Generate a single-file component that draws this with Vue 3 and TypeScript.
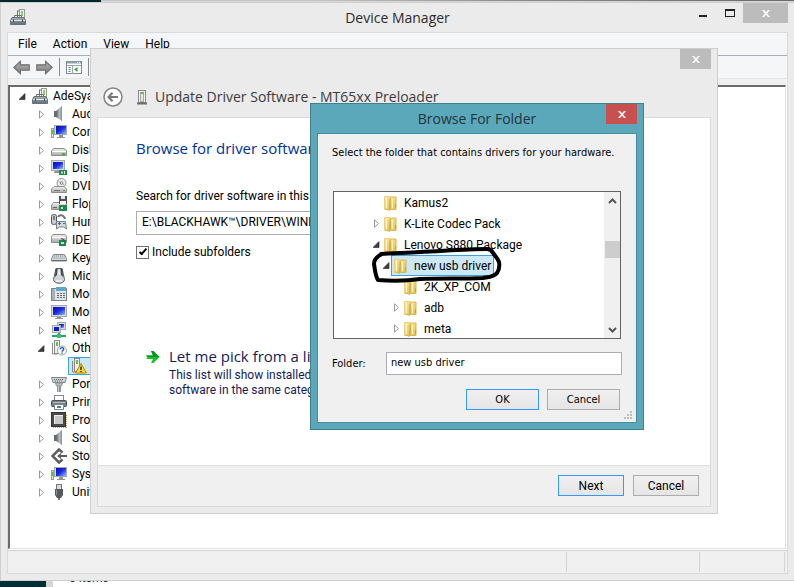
<script setup lang="ts">
import { ref } from 'vue'

interface DeviceNode {
  label: string
  icon: string
  open?: boolean
}

interface FolderNode {
  label: string
  level: number
  state: 'none' | 'closed' | 'open'
  selected?: boolean
}

const menus: string[] = ['File', 'Action', 'View', 'Help']

const devices: DeviceNode[] = [
  { label: 'Audio inputs and outputs', icon: 'speaker' },
  { label: 'Computer', icon: 'computer' },
  { label: 'Disk drives', icon: 'disk' },
  { label: 'Display adapters', icon: 'display' },
  { label: 'DVD/CD-ROM drives', icon: 'dvd' },
  { label: 'Floppy disk controllers', icon: 'floppy' },
  { label: 'Human Interface Devices', icon: 'hid' },
  { label: 'IDE ATA/ATAPI controllers', icon: 'ide' },
  { label: 'Keyboards', icon: 'keyboard' },
  { label: 'Mice and other pointing devices', icon: 'mouse' },
  { label: 'Modems', icon: 'modem' },
  { label: 'Monitors', icon: 'monitor' },
  { label: 'Network adapters', icon: 'network' },
  { label: 'Other devices', icon: 'unknown', open: true },
  { label: 'Ports (COM & LPT)', icon: 'port' },
  { label: 'Print queues', icon: 'printer' },
  { label: 'Processors', icon: 'cpu' },
  { label: 'Sound, video and game controllers', icon: 'speaker' },
  { label: 'Storage controllers', icon: 'storage' },
  { label: 'System devices', icon: 'computer' },
  { label: 'Universal Serial Bus controllers', icon: 'usb' },
]

const folders: FolderNode[] = [
  { label: 'Kamus2', level: 0, state: 'none' },
  { label: 'K-Lite Codec Pack', level: 0, state: 'closed' },
  { label: 'Lenovo S880 Package', level: 0, state: 'open' },
  { label: 'new usb driver', level: 1, state: 'open', selected: true },
  { label: '2K_XP_COM', level: 2, state: 'none' },
  { label: 'adb', level: 2, state: 'closed' },
  { label: 'meta', level: 2, state: 'closed' },
]

const driverPath = ref('E:\\BLACKHAWK™\\DRIVER\\WINDOWS')
const includeSubfolders = ref(true)
const folderName = ref('new usb driver')
</script>

<template>
  <div class="desktop">
    <!-- Shared icon symbols -->
    <svg class="symbols" aria-hidden="true">
      <defs>
        <linearGradient id="g-steel" x1="0" y1="0" x2="0" y2="1">
          <stop offset="0" stop-color="#a9b4bb" /><stop offset="1" stop-color="#5f6c74" />
        </linearGradient>
        <linearGradient id="g-silver" x1="0" y1="0" x2="0" y2="1">
          <stop offset="0" stop-color="#f4f4f4" /><stop offset="1" stop-color="#a8a8a8" />
        </linearGradient>
        <linearGradient id="g-screen" x1="0" y1="0" x2="1" y2="1">
          <stop offset="0" stop-color="#0a0ab0" /><stop offset=".5" stop-color="#1a2fe0" /><stop offset="1" stop-color="#9db8ff" />
        </linearGradient>
        <linearGradient id="g-cone" x1="0" y1="0" x2="1" y2="0">
          <stop offset="0" stop-color="#5b6268" /><stop offset=".6" stop-color="#b9c0c5" /><stop offset="1" stop-color="#79838a" />
        </linearGradient>
        <linearGradient id="g-fold" x1="0" y1="0" x2="1" y2="1">
          <stop offset="0" stop-color="#fbeea4" /><stop offset="1" stop-color="#e0bb4e" />
        </linearGradient>
        <linearGradient id="g-arrow" x1="0" y1="0" x2="0" y2="1">
          <stop offset="0" stop-color="#b4b4b4" /><stop offset="1" stop-color="#7c7c7c" />
        </linearGradient>
      </defs>
      <symbol id="i-x" viewBox="0 0 8 7">
        <path d="M0 0h2l2 2.200L6 0h2L5 3.500 8 7H6L4 4.800 2 7H0l3-3.500z" fill="#fff" />
      </symbol>
      <symbol id="i-closed" viewBox="0 0 7 9">
        <path d="M1.500 .8v7.400L5.500 4.500z" fill="#fff" stroke="#9a9a9a" />
      </symbol>
      <symbol id="i-open" viewBox="0 0 7 9">
        <path d="M6 1.500V7.500H0z" fill="#3c3c3c" stroke="#262626" stroke-width=".6" />
      </symbol>
      <symbol id="i-manager" viewBox="0 0 16 16">
        <rect x="9.500" y=".5" width="5" height="8" fill="#f2f2f2" stroke="#9a9a9a" />
        <rect x="11" y="2" width="2" height="5" fill="#8fd165" />
        <path d="M7 1.500h3v1H8V8H7z" fill="#6c777e" />
        <path d="M2 8.500h12l1.500 3v4H.5v-4z" fill="url(#g-steel)" stroke="#66727a" />
        <path d="M4.500 8.500v-2h7v2" fill="none" stroke="#66727a" />
        <path d="M1 11.500h14" stroke="#dfe6ea" />
        <path d="M3.500 10.500v2.500M12.500 10.500v2.500" stroke="#39444b" />
      </symbol>
      <symbol id="i-speaker" viewBox="0 0 16 16">
        <rect x="3" y="5" width="3" height="6" fill="#636b71" />
        <path d="M5 5l6-5v15l-6-4z" fill="url(#g-cone)" />
        <path d="M10.500 .5v14" stroke="#8f989e" />
      </symbol>
      <symbol id="i-computer" viewBox="0 0 16 16">
        <rect x=".5" y="4.500" width="2" height="9" fill="#e6e6e6" stroke="#9a9a9a" />
        <rect x="1" y="6" width="1" height="4" fill="#59c33a" />
        <rect x="3.500" y="1.500" width="12" height="9" fill="#d9dde2" stroke="#a5a9ae" />
        <rect x="5" y="2" width="10" height="8" fill="url(#g-screen)" />
        <path d="M8 11h4v2h2v1H6v-1h2z" fill="#8f9498" />
      </symbol>
      <symbol id="i-disk" viewBox="0 0 16 16">
        <path d="M3 6.500h10l2.500 2v5H.5v-5z" fill="url(#g-silver)" stroke="#8d8d8d" stroke-linejoin="round" />
        <path d="M1 9.500h14" stroke="#fff" />
        <rect x="11" y="11" width="3" height="2" fill="#41b52c" />
      </symbol>
      <symbol id="i-display" viewBox="0 0 16 16">
        <rect x=".5" y=".5" width="13" height="10" fill="#d9dde2" stroke="#a5a9ae" />
        <rect x="2" y="2" width="10" height="7" fill="url(#g-screen)" />
        <path d="M4 11h4v2H3v-1z" fill="#8f9498" />
        <rect x="8" y="10" width="8" height="5" fill="#1d8a4c" />
        <rect x="10" y="11.500" width="2" height="2" fill="#bfe9cf" />
        <path d="M13.500 11v3" stroke="#e8f5d0" />
      </symbol>
      <symbol id="i-dvd" viewBox="0 0 16 16">
        <circle cx="10.500" cy="5" r="4.500" fill="#e9edf0" stroke="#8e9499" />
        <path d="M10 5L7 2.500M10 5l3.500 2" stroke="#8fcf9a" />
        <circle cx="10.500" cy="5" r="1.300" fill="#fff" stroke="#777" />
        <path d="M3 8.500h10l2.500 2.500v3.500H.5V11z" fill="url(#g-silver)" stroke="#8d8d8d" />
        <path d="M3 12.500h6" stroke="#777" /><rect x="12" y="12" width="2" height="1" fill="#41b52c" />
      </symbol>
      <symbol id="i-floppy" viewBox="0 0 16 16">
        <path d="M2.500 6.500h11l2 2.500v4.500H.5V9z" fill="url(#g-silver)" stroke="#8d8d8d" />
        <rect x="8" y="0" width="8" height="8" fill="#4e5357" />
        <rect x="10" y="0" width="4" height="3" fill="#e9e9e9" /><rect x="9" y="5" width="6" height="3" fill="#f6f6f6" />
        <rect x="8" y="9" width="8" height="6" fill="#1d8a4c" /><rect x="10" y="11" width="2" height="2" fill="#bfe9cf" />
        <path d="M2 11.500h4" stroke="#666" />
      </symbol>
      <symbol id="i-hid" viewBox="0 0 16 16">
        <rect x=".5" y=".5" width="5" height="10" rx="2" fill="#c8ccd0" stroke="#54595d" />
        <path d="M3 2v4" stroke="#333" />
        <path d="M7 3c2-3 6-2 7 2" fill="none" stroke="#6d7377" stroke-width="2" />
        <path d="M5.500 7.500h9l1 7.500-3-2h-4l-3 2z" fill="#d5dadd" stroke="#7a8187" />
        <path d="M7 9.500h3M12 9.500h2M8.500 8v3" stroke="#3b6c9c" />
      </symbol>
      <symbol id="i-ide" viewBox="0 0 16 16">
        <path d="M2 2.500h12l1.500 2v6H.5v-6z" fill="url(#g-silver)" stroke="#8d8d8d" stroke-linejoin="round" />
        <path d="M1 5.500h14" stroke="#fff" />
        <rect x="8" y="8" width="7" height="6" fill="#1d8a4c" />
        <path d="M10 6.500l3 1v2" stroke="#3a3a3a" fill="none" />
        <rect x="10" y="10" width="3" height="2" fill="#bfe9cf" />
      </symbol>
      <symbol id="i-keyboard" viewBox="0 0 16 16">
        <path d="M2.500 4.500h11l2 4v2.500H.5V8.500z" fill="#d7dadd" stroke="#80868b" stroke-linejoin="round" />
        <path d="M3 6h10.500M2.500 8h11.500" stroke="#7a8086" stroke-dasharray="1 1" />
        <path d="M1 10.500h14" stroke="#666c71" />
      </symbol>
      <symbol id="i-mouse" viewBox="0 0 16 16">
        <path d="M5 .5h6l2.500 11c0 5-11 5-11 0z" fill="#d2d5d8" stroke="#565b5f" />
        <path d="M4.500 1h2L6 7 4 9zM9.500 1h2l.5 8-2-2z" fill="#44494d" /><rect x="7" y="2" width="2" height="5" fill="#e7e9ea" />
        <path d="M5 13h6" stroke="#fff" />
      </symbol>
      <symbol id="i-modem" viewBox="0 0 16 16">
        <rect x=".5" y="2.500" width="15" height="12" fill="#e1e5e8" stroke="#7b848a" />
        <rect x="5" y="1" width="10" height="4" fill="#5ea7cf" />
        <rect x="1" y="3" width="3" height="11" fill="#aab1b6" />
        <path d="M6 7.500h8M6 9.500h8M6 11.500h8" stroke="#656d72" stroke-dasharray="2 1" />
      </symbol>
      <symbol id="i-monitor" viewBox="0 0 16 16">
        <rect x=".5" y="1.500" width="15" height="11" fill="#d9dde2" stroke="#a5a9ae" />
        <rect x="2" y="3" width="12" height="8" fill="url(#g-screen)" />
        <path d="M6 13h4v1h2v1H4v-1h2z" fill="#8f9498" />
      </symbol>
      <symbol id="i-network" viewBox="0 0 16 16">
        <rect x="6.500" y=".5" width="8" height="7" fill="#d9dde2" stroke="#a5a9ae" /><rect x="8" y="2" width="5" height="4" fill="url(#g-screen)" />
        <rect x="1.500" y="3.500" width="8" height="7" fill="#d9dde2" stroke="#a5a9ae" /><rect x="3" y="5" width="5" height="4" fill="#0d1cc4" />
        <path d="M8 11v3M1 14h14" stroke="#25a463" stroke-width="2" /><rect x="6" y="12" width="4" height="4" fill="#35c07a" />
      </symbol>
      <symbol id="i-tower" viewBox="0 0 16 16">
        <rect x="4.500" y="1.500" width="7" height="12" fill="#f4f4f4" stroke="#8a8a8a" />
        <rect x="6.500" y="3.500" width="3" height="9" fill="#e4ece0" stroke="#a5a9a2" />
        <rect x="7" y="3" width="3" height="2" fill="#63c13e" />
        <path d="M3 14.500h10" stroke="#6d6d6d" stroke-width="2" />
      </symbol>
      <symbol id="i-unknown" viewBox="0 0 16 16">
        <rect x="3.500" y=".5" width="5" height="13" fill="#eeeeee" stroke="#8a8a8a" />
        <rect x="5" y="2" width="2" height="4" fill="#63c13e" />
        <path d="M1.500 3v11h5" fill="none" stroke="#8a8a8a" />
        <circle cx="11" cy="10.500" r="4.500" fill="#fff" stroke="#9aa0a8" />
        <path d="M9.300 9.300c0-2.200 3.500-2.200 3.500 0 0 1.200-1.700 1-1.700 2.500M11.100 12.500v1.200" fill="none" stroke="#1c4fc2" stroke-width="1.300" />
      </symbol>
      <symbol id="i-warning" viewBox="0 0 16 16">
        <rect x="3.500" y=".5" width="5" height="13" fill="#eeeeee" stroke="#8a8a8a" />
        <rect x="5" y="2" width="2" height="4" fill="#63c13e" />
        <path d="M1.500 3v11h5" fill="none" stroke="#8a8a8a" />
        <path d="M10 5.500l5.500 9.500h-11z" fill="#ffd92e" stroke="#b98a00" stroke-linejoin="round" />
        <path d="M10 8.500v3.500M10 13v1.300" stroke="#222" stroke-width="1.400" />
      </symbol>
      <symbol id="i-port" viewBox="0 0 16 16">
        <path d="M.5 1.500h15l-1.500 5H2z" fill="#cdd3d8" stroke="#7d868d" />
        <path d="M3 3.500h10M4 5h8" stroke="#5e686f" stroke-dasharray="1 1" />
        <path d="M4.500 7h7l-1 3h-5z" fill="#b4bdc3" stroke="#8d969d" />
        <path d="M8 10v6" stroke="#8a949b" stroke-width="4" /><path d="M7.500 10v6" stroke="#c5ccd1" />
      </symbol>
      <symbol id="i-printer" viewBox="0 0 16 16">
        <rect x="3.500" y="1.500" width="9" height="5" fill="#fff" stroke="#888" />
        <rect x=".5" y="6.500" width="15" height="6" rx="1" fill="#777d82" stroke="#4d5256" />
        <path d="M2 8.500h12" stroke="#b9bec2" />
        <rect x="3.500" y="10.500" width="9" height="5" fill="#fff" stroke="#888" />
        <rect x="6" y="12" width="4" height="2" fill="#2f8fa8" />
      </symbol>
      <symbol id="i-cpu" viewBox="0 0 16 16">
        <path d="M15 3v13M2 15h13" stroke="#d39a3c" stroke-width="2" stroke-dasharray="1 1" />
        <rect x=".5" y=".5" width="14" height="14" fill="#4a4a4a" stroke="#333" />
        <rect x="3" y="3" width="9" height="9" fill="#c9c9c9" /><path d="M3.500 12V3.500H12" stroke="#eee" fill="none" />
      </symbol>
      <symbol id="i-storage" viewBox="0 0 16 16">
        <path d="M11.500 4.500L8 1.500 1.500 8 8 14.500l3.500-3" fill="none" stroke="#5d5d5d" stroke-width="2.500" />
        <path d="M6 8l4-3v2h6v2h-6v2z" fill="#5d5d5d" />
      </symbol>
      <symbol id="i-usb" viewBox="0 0 16 16">
        <rect x="5.500" y=".5" width="5" height="5" fill="#d8dadc" stroke="#777" />
        <path d="M4 5h8v6l-2 3H6l-2-3z" fill="#55595c" /><path d="M8 14v2" stroke="#777" stroke-width="2" />
        <path d="M5.500 6v5" stroke="#8d9194" />
      </symbol>
      <symbol id="i-folder" viewBox="0 0 16 16">
        <path d="M1.500 1.500h6l1 1v12h-7z" fill="url(#g-fold)" stroke="#ecd07a" />
        <path d="M7.500 3.500l1-1.500h4.500v12.500H7.500z" fill="url(#g-fold)" stroke="#d9b850" />
        <path d="M3.500 2.500v11" stroke="#fff8cf" /><path d="M9.500 4v9" stroke="#fdf3bd" />
        <path d="M2.500 14l4 1.500 .5-12" fill="none" stroke="#c99f33" stroke-width=".7" />
        <rect x="12" y="9" width="1" height="4" fill="#6bb5d8" />
      </symbol>
      <symbol id="i-nav" viewBox="0 0 16 14">
        <path d="M.8 7L7 1.200V4.500h8.300v5H7v3.300z" fill="url(#g-arrow)" stroke="#6c6c6c" />
      </symbol>
    </svg>

    <div class="backdrop">
      <div class="edge-top"><i></i><b></b></div>
      <div class="edge-bottom"><i></i><div class="explorer">6 items</div></div>
    </div>

    <!-- Device Manager -->
    <section class="window manager" aria-label="Device Manager">
      <header class="titlebar">
        <svg class="ico app-icon"><use href="#i-manager" /></svg>
        <h1>Device Manager</h1>
        <div class="controls">
          <button type="button" class="min" aria-label="Minimize"><span></span></button>
          <button type="button" class="max" aria-label="Maximize"><span></span></button>
          <button type="button" class="close" aria-label="Close"><svg width="8" height="7"><use href="#i-x" /></svg></button>
        </div>
      </header>
      <div class="client">
        <nav class="menubar">
          <button v-for="m in menus" :key="m" type="button">{{ m }}</button>
        </nav>
        <div class="toolbar">
          <button type="button" aria-label="Back"><svg width="17" height="15"><use href="#i-nav" /></svg></button>
          <button type="button" aria-label="Forward"><svg class="flip" width="17" height="15"><use href="#i-nav" /></svg></button>
          <span class="rule"></span>
          <button type="button" class="pane" aria-label="Show console tree">
            <svg width="16" height="13" viewBox="0 0 16 13">
              <rect x=".5" y=".5" width="15" height="12" fill="#fff" stroke="#7f8a94" />
              <path d="M1 1.500h14" stroke="#8fa0b0" stroke-width="2" /><path d="M11 1.500h4" stroke="#fff" stroke-dasharray="1 1" />
              <path d="M1 4.500h14M6.500 4v9" stroke="#9aa5af" />
              <path d="M2.500 6.500h2M2.500 8.500h2M2.500 10.500h2" stroke="#3b78bd" />
              <path d="M11.500 6v5L8 8.500z" fill="#3da52f" />
            </svg>
          </button>
          <span class="rule"></span>
        </div>
        <div class="device-tree">
          <div class="node root">
            <button type="button" aria-label="Collapse"><svg width="7" height="9"><use href="#i-open" /></svg></button>
            <svg class="ico"><use href="#i-manager" /></svg><span>AdeSya</span>
          </div>
          <template v-for="d in devices" :key="d.label">
            <div class="node">
              <button type="button" :aria-label="d.open ? 'Collapse' : 'Expand'">
                <svg width="7" height="9"><use :href="d.open ? '#i-open' : '#i-closed'" /></svg>
              </button>
              <svg class="ico"><use :href="'#i-' + d.icon" /></svg><span>{{ d.label }}</span>
            </div>
            <div v-if="d.open" class="child">
              <svg class="ico"><use href="#i-warning" /></svg><span>MT65xx Preloader</span>
            </div>
          </template>
        </div>
        <footer class="statusbar"><span></span><span></span><span></span></footer>
      </div>
    </section>

    <!-- Update Driver Software wizard -->
    <section class="window wizard" aria-label="Update Driver Software">
      <div class="caption">
        <button type="button" class="close" aria-label="Close"><svg width="8" height="7"><use href="#i-x" /></svg></button>
      </div>
      <header class="wizard-head">
        <button type="button" class="back" aria-label="Back">
          <svg width="20" height="20" viewBox="0 0 20 20">
            <circle cx="10" cy="10" r="9" fill="#fff" stroke="#838383" stroke-width="1.500" />
            <path d="M15 10H6M9.500 5.800L5.500 10l4 4.200" fill="none" stroke="#777" stroke-width="2" />
          </svg>
        </button>
        <svg class="ico"><use href="#i-tower" /></svg>
        <h2>Update Driver Software - MT65xx Preloader</h2>
      </header>
      <div class="page">
        <div class="page-body">
          <h3>Browse for driver software</h3>
          <label class="path-label" for="path">Search for driver software in this location:</label>
          <input id="path" v-model="driverPath" class="path" type="text" />
          <label class="check"><input v-model="includeSubfolders" type="checkbox" />Include subfolders</label>
          <button type="button" class="command">
            <svg width="15" height="14" viewBox="0 0 15 14">
              <path d="M1 5.500h7L6 1h2.500L14.500 7 8.500 13H6l2-4H1L2.500 7.500z" fill="#18c22c" />
              <path d="M1 5.500h7L6 1h2.500L14.500 7H2.500z" fill="#0d9420" />
            </svg>
            <span class="command-text">
              <strong>Let me pick from a list</strong>
              <small>This list will show installed driver<br />software in the same category</small>
            </span>
          </button>
        </div>
        <footer class="actions">
          <button type="button" class="btn primary">Next</button>
          <button type="button" class="btn">Cancel</button>
        </footer>
      </div>
    </section>

    <!-- Browse For Folder -->
    <section class="window browse" aria-label="Browse For Folder">
      <header class="browse-title">
        <h2>Browse For Folder</h2>
        <button type="button" class="close" aria-label="Close"><svg width="8" height="7"><use href="#i-x" /></svg></button>
      </header>
      <div class="browse-body">
        <p>Select the folder that contains drivers for your hardware.</p>
        <div class="folder-tree">
          <ul>
            <li v-for="f in folders" :key="f.label" :class="'level-' + f.level">
              <button v-if="f.state !== 'none'" type="button" :aria-label="f.state === 'open' ? 'Collapse' : 'Expand'">
                <svg width="7" height="9"><use :href="'#i-' + f.state" /></svg>
              </button>
              <span v-else class="no-toggle"></span>
              <span class="folder" :class="{ selected: f.selected }"><svg class="ico"><use href="#i-folder" /></svg>{{ f.label }}</span>
            </li>
          </ul>
          <div class="scrollbar">
            <button type="button" aria-label="Scroll up"><svg width="9" height="6" viewBox="0 0 9 6"><path d="M1 5l3.500-3.500L8 5" fill="none" stroke="#555" stroke-width="2" /></svg></button>
            <span class="thumb"></span>
            <button type="button" aria-label="Scroll down"><svg width="9" height="6" viewBox="0 0 9 6"><path d="M1 1l3.500 3.500L8 1" fill="none" stroke="#555" stroke-width="2" /></svg></button>
          </div>
          <svg class="marker" viewBox="370 244 136 42" width="136" height="42" aria-hidden="true">
            <path d="M381 254c12-1 25-1 39-2 23-1 46-3 67-3 4 0 5 2 6 4 3 4 5 6 6 9 1 5 0 8-2 11-3 4-8 4-14 5-21 1-42 0-63 1-14 2-28 2-42 1-3-5-3-11-4-16 0-4 2-7 8-10" fill="none" stroke="#000" stroke-width="4" stroke-linejoin="round" stroke-linecap="round" />
          </svg>
        </div>
        <div class="field">
          <label for="folder">Folder:</label>
          <input id="folder" v-model="folderName" type="text" />
        </div>
        <footer class="browse-actions">
          <button type="button" class="btn primary">OK</button>
          <button type="button" class="btn">Cancel</button>
        </footer>
        <svg class="grip" width="9" height="9" viewBox="0 0 9 9" aria-hidden="true">
          <path d="M6 0h2v2H6zM3 3h2v2H3zM6 3h2v2H6zM0 6h2v2H0zM3 6h2v2H3zM6 6h2v2H6z" fill="#bcbcbc" />
        </svg>
      </div>
    </section>
  </div>
</template>

<style>
body {
  margin: 0;
}
</style>

<style scoped>
.desktop {
  position: relative;
  height: 100vh;
  overflow: hidden;
  background: #d6d6d6;
  color: #000;
  font: 12px/18px Roboto, "Noto Sans", sans-serif;
}
.desktop *,
.desktop *::before,
.desktop *::after {
  box-sizing: border-box;
}
button {
  margin: 0;
  padding: 0;
  border: 0;
  background: none;
  color: inherit;
  font: inherit;
}
input {
  font: inherit;
  color: inherit;
  border-radius: 0;
}
h1,
h2,
h3,
p,
ul {
  margin: 0;
  padding: 0;
  font-weight: 400;
}
h1,
h2,
h3,
.command strong {
  font-family: "Open Sans", "Noto Sans", sans-serif;
}
svg {
  display: block;
  flex: none;
}
.symbols {
  position: absolute;
  width: 0;
  height: 0;
}
.ico {
  width: 16px;
  height: 16px;
}

.backdrop {
  height: 100%;
  display: flex;
  flex-direction: column;
  justify-content: space-between;
}
.edge-top {
  display: flex;
  height: 2px;
}
.edge-top i {
  width: 101px;
  background: #00292f;
}
.edge-top b {
  flex: 1;
  background: linear-gradient(90deg, #c8c8c8 30%, #8a8a8a 60%, #6e6868);
  height: 1px;
}
.edge-bottom {
  display: flex;
  gap: 7px;
  height: 10px;
}
.edge-bottom i {
  width: 46px;
  background: #002f38;
}
.explorer {
  flex: 1;
  padding-left: 16px;
  background: #fff;
  color: #1e2a4a;
  line-height: 2px;
}

.window {
  position: absolute;
  display: flex;
  flex-direction: column;
  border: 1px solid #cfcfcf;
  background: #ebebeb;
}
.close {
  display: grid;
  place-items: center;
  width: 31px;
  height: 20px;
  background: #bcbcbc;
}

.manager {
  inset: 2px 0 6px 0;
  border-right: 0;
  padding: 0 6px 6px;
}
.titlebar {
  display: grid;
  grid-template-columns: 1fr auto 1fr;
  height: 29px;
}
.app-icon {
  margin: 6px 0 0 3px;
}
h1 {
  font-size: 14px;
  line-height: 30px;
  color: #2b2b2b;
}
.controls {
  display: flex;
  justify-content: flex-end;
  align-items: flex-start;
}
.controls .close {
  width: 45px;
}
.min,
.max {
  display: grid;
  place-items: center;
  width: 27px;
  height: 20px;
}
.min span {
  width: 8px;
  height: 2px;
  margin-top: 5px;
  background: #222;
}
.max span {
  width: 10px;
  height: 8px;
  border: 1px solid #222;
  border-top-width: 2px;
}
.client {
  flex: 1;
  min-height: 0;
  display: flex;
  flex-direction: column;
  border: 1px solid #dadada;
  background: #fff;
}
.menubar {
  display: flex;
  gap: 16px;
  height: 23px;
  padding-left: 10px;
  border-bottom: 1px solid #a9adb5;
  background: #f5f6f8;
}
.toolbar {
  display: flex;
  align-items: center;
  gap: 6px;
  height: 23px;
  padding-left: 5px;
  border-bottom: 1px solid #e6e6e6;
  background: #f5f6f8;
}
.flip {
  transform: scaleX(-1);
}
.rule {
  width: 1px;
  height: 18px;
  background: #8b8b8b;
}
.device-tree {
  flex: 1;
  min-height: 0;
  margin: 6px 1px 0 0;
  overflow: hidden;
  background: #fff;
  border: 1px solid #e3e3e3;
  border-top: 2px solid #6a6a6a;
  border-left: 2px solid #6a6a6a;
  box-shadow: 0 -6px #f0f0f0;
}
.node,
.child {
  display: flex;
  align-items: center;
  gap: 5px;
  height: 18px;
  white-space: nowrap;
}
.node {
  padding-left: 28px;
}
.node button {
  width: 8px;
}
.root {
  padding-left: 9px;
}
.child {
  margin-left: 58px;
  width: 140px;
  padding-left: 2px;
  border: 1px solid #3fa0dc;
  background: #cbe8f6;
}
.statusbar {
  display: flex;
  height: 23px;
  margin-top: 1px;
  padding: 1px 2px;
  border-top: 1px solid #d4d4d4;
  background: #f0f0f0;
}
.statusbar span {
  border-right: 1px solid #d4d4d4;
  width: 85px;
}
.statusbar span:first-child {
  flex: 1;
}
.statusbar span:nth-child(2) {
  width: 133px;
}

.wizard {
  left: 90px;
  top: 48px;
  width: 628px;
  padding: 0 6px 6px;
}
.caption {
  display: flex;
  justify-content: flex-end;
}
.wizard-head {
  display: flex;
  align-items: center;
  height: 48px;
  padding: 8px 0 0 6px;
}
.wizard-head .ico {
  margin: 0 5px 0 11px;
}
.wizard-head h2 {
  font-size: 14px;
  color: #3c3c3c;
}
.page {
  border: 1px solid #dadada;
  background: #fff;
}
.page-body {
  display: flex;
  flex-direction: column;
  align-items: flex-start;
  min-height: 347px;
  padding: 18px 38px 0;
}
h3 {
  font-size: 15px;
  line-height: 24px;
  color: #003399;
}
.path-label {
  margin-top: 27px;
}
.path {
  width: 440px;
  height: 24px;
  margin-top: 6px;
  padding: 0 5px 2px;
  border: 1px solid #abadb3;
  background: #fff;
}
.check {
  display: flex;
  align-items: center;
  gap: 3px;
  margin-top: 8px;
}
.check input {
  appearance: none;
  display: grid;
  place-items: center;
  width: 13px;
  height: 13px;
  margin: 0;
  border: 1px solid #707070;
  background: #fff;
}
.check input:checked::before {
  content: "";
  width: 8px;
  height: 4px;
  margin-top: -3px;
  border: solid #000;
  border-width: 0 0 2px 2px;
  transform: rotate(-48deg);
}
.command {
  display: flex;
  gap: 9px;
  margin-top: 84px;
  padding-left: 9px;
  text-align: left;
  color: #151c55;
}
.command svg {
  margin-top: 5px;
}
.command-text {
  display: flex;
  flex-direction: column;
}
.command strong {
  font-size: 15px;
  font-weight: 400;
  line-height: 22px;
}
.command small {
  margin-top: 1px;
  font-size: 12px;
  line-height: 15px;
}
.actions {
  display: flex;
  justify-content: flex-end;
  gap: 9px;
  padding: 9px 11px 10px;
  border-top: 1px solid #dfdfdf;
  background: #f0f0f0;
}
.btn {
  width: 66px;
  height: 21px;
  line-height: 18px;
  border: 1px solid #acacac;
  background: linear-gradient(#f0f0f0, #e5e5e5);
}
.btn.primary {
  border-color: #3399ff;
}

.browse {
  left: 310px;
  top: 103px;
  width: 334px;
  padding: 0 6px 6px;
  border-color: #43808e;
  background: #5ba8bb;
  font-family: "DejaVu Sans Condensed", "DejaVu Sans", sans-serif;
  font-size: 11px;
}
.browse-title {
  display: grid;
  grid-template-columns: 31px 1fr 31px;
  height: 29px;
}
.browse-title h2 {
  grid-column: 2;
  text-align: center;
  font-size: 14px;
  line-height: 30px;
  color: #22343a;
}
.browse-title .close {
  background: #c75050;
}
.browse-body {
  position: relative;
  padding: 10px 16px 12px 14px;
  border: 1px solid #488c9b;
  background: #f0f0f0;
}
.browse-body p {
  white-space: nowrap;
}
.folder-tree {
  position: relative;
  display: flex;
  height: 148px;
  margin: 29px -1px 0 1px;
  border: 1px solid #646464;
  background: #fff;
  font-family: Roboto, "Noto Sans", sans-serif;
  font-size: 12px;
}
.folder-tree ul {
  flex: 1;
  overflow: hidden;
  list-style: none;
}
.folder-tree li {
  display: flex;
  align-items: center;
  height: 21px;
  padding-left: 39px;
}
.folder-tree li.level-1 {
  padding-left: 49px;
}
.folder-tree li.level-2 {
  padding-left: 59px;
}
.folder-tree li button,
.no-toggle {
  width: 8px;
}
.folder {
  display: flex;
  align-items: center;
  gap: 5px;
  height: 21px;
  padding: 0 2px 0 1px;
  border: 1px solid transparent;
}
.folder.selected {
  border-color: #3fa0dc;
  background: #cbe8f6;
}
.scrollbar {
  display: flex;
  flex-direction: column;
  align-items: center;
  width: 16px;
  background: #f0f0f0;
}
.scrollbar button {
  display: grid;
  place-items: center;
  width: 16px;
  height: 17px;
}
.thumb {
  width: 15px;
  height: 17px;
  margin: 32px 0 auto;
  background: #cdcdcd;
}
.marker {
  position: absolute;
  left: 36px;
  top: 52px;
}
.field {
  display: flex;
  align-items: center;
  margin-top: 13px;
}
.field label {
  width: 54px;
}
.field input {
  flex: 1;
  min-width: 0;
  height: 23px;
  margin-right: -2px;
  padding: 0 4px 3px;
  border: 1px solid #abadb3;
  background: #fff;
}
.browse-actions {
  display: flex;
  justify-content: flex-end;
  gap: 8px;
  margin-top: 14px;
}
.browse-actions .btn {
  width: 73px;
}
.grip {
  position: absolute;
  right: 3px;
  bottom: 2px;
}
</style>
